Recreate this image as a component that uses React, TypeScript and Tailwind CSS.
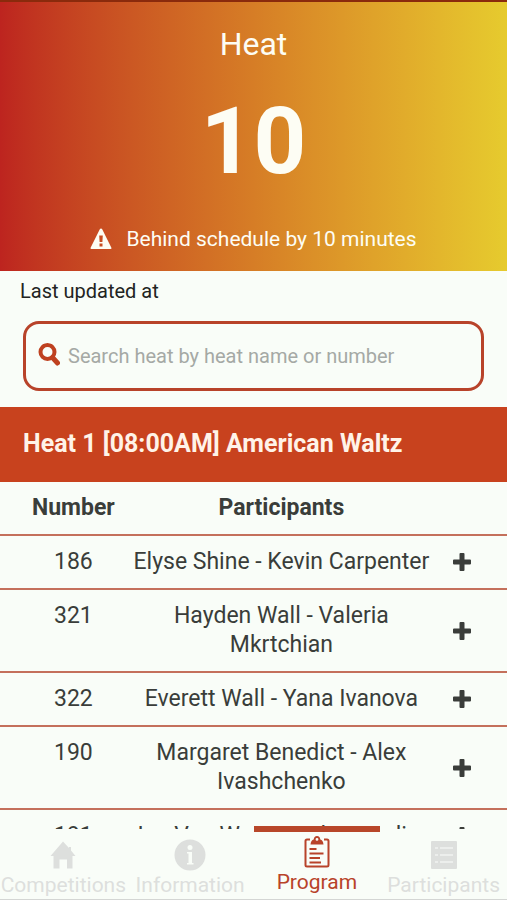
const ENTRIES = [
  { number: 186, names: "Elyse Shine - Kevin Carpenter" },
  { number: 321, names: "Hayden Wall - Valeria Mkrtchian" },
  { number: 322, names: "Everett Wall - Yana Ivanova" },
  { number: 190, names: "Margaret Benedict - Alex Ivashchenko" },
  { number: 191, names: "Jan Van Wesemael - Rosalina" },
];

function WarningIcon() {
  return (
    <svg viewBox="0 0 22 22" className="w-[22px] h-[22px]" aria-hidden="true">
      <path
        fill="currentColor"
        fillRule="evenodd"
        d="M11 0.500q.8 0 1.200.7l9.200 18.600q.5 1.200-.9 1.200H1.500q-1.400 0-.9-1.200L9.800 1.200Q10.200.5 11 .5zM9.200 7.500l.4 6.500h2.800l.4-6.500zM9.500 15.500v3h3v-3z"
      />
    </svg>
  );
}

function SearchIcon() {
  return (
    <svg
      viewBox="0 0 22 23"
      className="shrink-0 w-[22px] h-[23px] mb-1 text-[#bf4120]"
      aria-hidden="true"
    >
      <circle cx="9.500" cy="9" r="7" fill="none" stroke="currentColor" strokeWidth="4" />
      <path
        d="M14.500 14.500 19.500 20"
        stroke="currentColor"
        strokeWidth="5"
        strokeLinecap="round"
      />
    </svg>
  );
}

function PlusIcon() {
  return (
    <svg viewBox="0 0 18 18" className="w-[18px] h-[18px]" aria-hidden="true">
      <path
        fill="currentColor"
        d="M7.500 0h3q1 0 1 1v5.500H17q1 0 1 1v3q0 1-1 1h-5.500V17q0 1-1 1h-3q-1 0-1-1v-5.500H1q-1 0-1-1v-3q0-1 1-1h5.500V1q0-1 1-1z"
      />
    </svg>
  );
}

function HomeIcon() {
  return (
    <svg viewBox="0 0 26 28" className="w-[26px] h-[28px]" aria-hidden="true">
      <path
        fill="currentColor"
        d="M13 .500 19 7V6H21V9.500L25.500 15H22.500V27.500H17V18.500H9.500V27.500H3.500V15H.500z"
      />
    </svg>
  );
}

function InfoIcon() {
  return (
    <svg viewBox="0 0 32 32" className="w-8 h-8" aria-hidden="true">
      <circle cx="16" cy="16" r="15.500" fill="currentColor" />
      <circle cx="16" cy="8.500" r="2.500" fill="#f9fdf8" />
      <path fill="#f9fdf8" d="M13 13h5v11h1.500v1.500H13V24h1.500v-9.500H13z" />
    </svg>
  );
}

function ClipboardIcon() {
  return (
    <svg viewBox="0 0 26 32" className="w-[26px] h-8" aria-hidden="true">
      <path
        d="M6 3.500H3q-1.500 0-1.500 1.500v24q0 1.500 1.500 1.500h20q1.500 0 1.500-1.500V5q0-1.500-1.500-1.500h-3M5.500 13h7M5.500 17.500h14M5.500 22h10.500M5.500 26.500h11.500"
        fill="none"
        stroke="currentColor"
        strokeWidth="2"
      />
      <path
        fill="currentColor"
        fillRule="evenodd"
        d="M13 0q3 0 3.300 3.500Q19 4 19.500 8.500H6.500Q7 4 9.700 3.500 10 0 13 0zm0 2a1.400 1.400 0 1 0 0 2.800A1.400 1.400 0 0 0 13 2z"
      />
    </svg>
  );
}

function ListIcon() {
  return (
    <svg viewBox="0 0 26 28" className="w-[26px] h-[28px]" aria-hidden="true">
      <rect width="26" height="28" rx="1" fill="currentColor" />
      <path
        d="M4 7h3M9 7h13M4 14h3M9 14h13M4 21h3M9 21h13"
        stroke="#f1f4f1"
        strokeWidth="1.500"
      />
    </svg>
  );
}

const TABS = [
  { label: "Competitions", Icon: HomeIcon, active: false },
  { label: "Information", Icon: InfoIcon, active: false },
  { label: "Program", Icon: ClipboardIcon, active: true },
  { label: "Participants", Icon: ListIcon, active: false },
];

export default function App() {
  return (
    <div className="flex flex-col h-screen overflow-hidden bg-[#f9fdf8] font-['Roboto',sans-serif] text-[#3a3d3a]">
      <header className="shrink-0 flex flex-col items-center border-t-2 border-[#8a2a0c] bg-linear-to-r from-[#bd241f] via-[#d67d26] to-[#e6cb2e] pt-6 pb-4 text-[#fdfdf4]">
        <h1 className="text-[32px] leading-9">Heat</h1>
        <p className="text-[92px] leading-[112px] font-bold mt-6">10</p>
        <p className="flex items-center gap-3.5 text-[21px] leading-8 mt-[25px]">
          <WarningIcon />
          Behind schedule by 10 minutes
        </p>
      </header>

      <main className="flex-1 min-h-0 overflow-hidden">
        <p className="px-5 pt-1.5 text-[20px] leading-7 text-[#222422]">
          Last updated at
        </p>
        <label className="flex items-center gap-2 mx-[23px] mt-4 h-[70px] px-3 border-[3px] border-[#b8432a] rounded-2xl">
          <SearchIcon />
          <input
            type="search"
            aria-label="Search heat"
            placeholder="Search heat by heat name or number"
            className="flex-1 min-w-0 bg-transparent text-[20px] outline-none placeholder:text-[#a5a9a5]"
          />
        </label>

        <section className="mt-4">
          <h2 className="bg-[#c8421e] px-[23px] pt-[21px] pb-[23px] text-[25px] leading-[31px] font-bold text-[#fff3e8]">
            Heat 1 [08:00AM] American Waltz
          </h2>
          <table className="w-full table-fixed border-collapse text-[23px] leading-[29px] text-center">
            <colgroup>
              <col className="w-[25%]" />
              <col />
              <col className="w-[14%]" />
            </colgroup>
            <thead>
              <tr className="border-b-2 border-[#c4705c]">
                <th className="pl-5 pt-[11px] pb-3 font-bold">Number</th>
                <th className="pt-[11px] pb-3 font-bold">Participants</th>
                <th aria-label="Details" />
              </tr>
            </thead>
            <tbody>
              {ENTRIES.map((e) => (
                <tr key={e.number} className="border-b-2 border-[#c4705c]">
                  <td className="pl-5 pt-[11px] pb-3 align-top">{e.number}</td>
                  <td className="pt-[11px] pb-3">{e.names}</td>
                  <td className="pr-5 align-middle">
                    <button
                      aria-label={`Show ${e.names}`}
                      className="block mx-auto"
                    >
                      <PlusIcon />
                    </button>
                  </td>
                </tr>
              ))}
            </tbody>
          </table>
        </section>
      </main>

      <nav className="shrink-0 grid grid-cols-4 h-[71px] border-b border-[#d4d6d4] bg-[#f9fdf8]">
        {TABS.map(({ label, Icon, active }) => (
          <a
            key={label}
            href={`#${label.toLowerCase()}`}
            aria-current={active ? "page" : undefined}
            className={
              active
                ? "relative flex flex-col items-center pt-[7px] text-[#b8432a]"
                : "flex flex-col items-center pt-2.5 text-[#dddfdd]"
            }
          >
            {active && (
              <span className="absolute inset-x-0 -top-[3px] h-1.5 bg-[#b8472a]" />
            )}
            <span className="flex h-8 items-center">
              <Icon />
            </span>
            <span className="text-[21px] leading-7">{label}</span>
          </a>
        ))}
      </nav>
    </div>
  );
}
